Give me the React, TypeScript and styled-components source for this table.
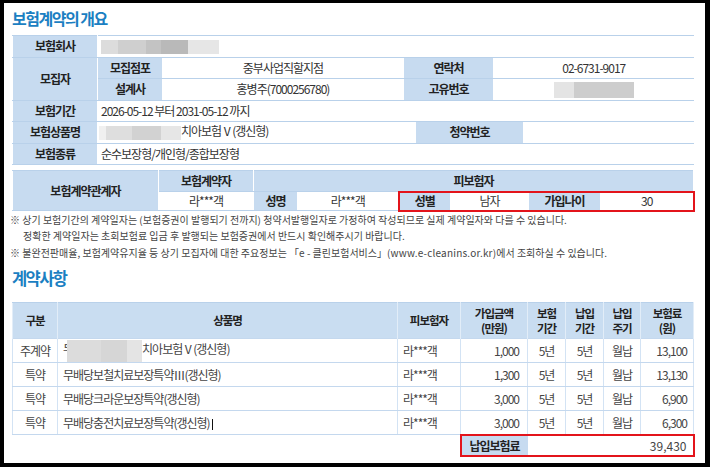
import React from "react";
import styled, { createGlobalStyle, css } from "styled-components";

const GlobalStyle = createGlobalStyle`
  html, body { margin: 0; padding: 0; background: #000; }
  body { font-family: "Noto Sans CJK KR", "Noto Sans", sans-serif; color: #333; }
  #root { width: 710px; height: 467px; overflow: hidden; }
`;

const Frame = styled.div`
  margin: 3px 0 0 4px;
  width: 701px;
  height: 460px;
  background: #fff;
  box-sizing: border-box;
  padding: 4px 0 0 8px;
  overflow: hidden;
`;

const Title = styled.h2<{ $size: number; $mt: number; $mb: number; $ls: number }>`
  margin: ${(p) => p.$mt}px 0 ${(p) => p.$mb}px 0;
  font-size: ${(p) => p.$size}px;
  line-height: 22px;
  font-weight: 700;
  color: #1b7fc2;
  letter-spacing: ${(p) => p.$ls}px;
`;

const Table = styled.table<{ $mt?: number }>`
  width: 681px;
  margin-top: ${(p) => p.$mt ?? 0}px;
  border-collapse: collapse;
  table-layout: fixed;
  font-size: 12px;
  letter-spacing: -1px;
`;

type Red = "left" | "mid" | "right";

const redCss = (r?: Red) =>
  r
    ? css`
        border-top: 2px solid #e3141b;
        border-bottom: 2px solid #e3141b;
        ${r === "left" ? "border-left: 2px solid #e3141b;" : ""}
        ${r === "right" ? "border-right: 2px solid #e3141b;" : ""}
      `
    : "";

const Row = styled.tr<{ $h: number }>`
  height: ${(p) => p.$h}px;
`;

const Label = styled.th<{ $red?: Red }>`
  background: #c7dbf0;
  color: #222;
  font-weight: 700;
  text-align: center;
  padding: 0;
  border-top: 1px solid #b9d1ea;
  border-bottom: 1px solid #b9d1ea;
  border-left: 1px solid #fff;
  border-right: 1px solid #fff;
  line-height: 14px;
  ${(p) => redCss(p.$red)}
`;

const Cell = styled.td<{ $align?: "left" | "center" | "right"; $pad?: number; $red?: Red }>`
  text-align: ${(p) => p.$align ?? "center"};
  padding: 0 ${(p) => p.$pad ?? 4}px;
  color: #333;
  line-height: 14px;
  border-top: 1px solid #b9d1ea;
  border-bottom: 1px solid #b9d1ea;
  white-space: nowrap;
  overflow: hidden;
  ${(p) => redCss(p.$red)}
`;

const HeadCell = styled.th`
  background: #c9ddf1;
  color: #222;
  font-weight: 700;
  font-size: 11.5px;
  line-height: 15px;
  text-align: center;
  padding: 0;
  border-left: 1px solid #e2edf8;
  border-right: 1px solid #e2edf8;
  border-top: 1px solid #b9d1ea;
`;

const BodyCell = styled.td<{ $align?: "left" | "center" | "right"; $pad?: number }>`
  text-align: ${(p) => p.$align ?? "center"};
  padding: 0 ${(p) => p.$pad ?? 4}px;
  color: #444;
  border-top: 1px solid #c4d8ee;
  border-bottom: 1px solid #c4d8ee;
  border-left: 1px solid #d3e3f4;
  border-right: 1px solid #d3e3f4;
  white-space: nowrap;
  overflow: hidden;
`;

const FootBlank = styled.td`
  border: none;
  border-top: 1px solid #c4d8ee;
`;

const FootLabel = styled.th`
  background: #c7dbf0;
  color: #222;
  font-weight: 700;
  padding: 0;
  text-align: center;
  border-top: 2px solid #e3141b;
  border-bottom: 2px solid #e3141b;
  border-left: 2px solid #e3141b;
`;

const FootValue = styled.td`
  text-align: right;
  padding: 0 6px;
  color: #444;
  letter-spacing: 0;
  border-top: 2px solid #e3141b;
  border-bottom: 2px solid #e3141b;
  border-right: 2px solid #e3141b;
`;

const Blur = styled.span<{ $w: number; $h: number; $bg: string; $ml?: number }>`
  display: inline-block;
  vertical-align: middle;
  position: relative;
  margin-left: ${(p) => p.$ml ?? 0}px;
  width: ${(p) => p.$w}px;
  height: ${(p) => p.$h}px;
  background: ${(p) => p.$bg};
  filter: blur(0.6px);
`;

const Caret = styled.span`
  display: inline-block;
  vertical-align: middle;
  width: 1px;
  height: 11px;
  margin-left: 2px;
  background: #111;
`;

const Notes = styled.div`
  margin: 0 0 0 -2px;
  font-size: 10px;
  line-height: 16.5px;
  letter-spacing: 0;
  color: #444;
`;

const NoteLine = styled.div<{ $indent?: number }>`
  padding-left: ${(p) => p.$indent ?? 0}px;
  white-space: nowrap;
`;

const Url = styled.span`
  letter-spacing: 0.2px;
`;

const companyBlur =
  "linear-gradient(90deg,#dcdcdc 0 14%,#cfcfcf 14% 38%,#c3c3c3 38% 51%,#b9b9b9 51% 74%,#e6e6e6 74% 100%)";
const idBlur = "linear-gradient(90deg,#e4e4e4 0 25%,#cdcdcd 25% 100%)";
const prodBlur = "linear-gradient(90deg,#f0f0f0 0 8%,#dedede 8% 40%,#d2d2d2 40% 75%,#e6e6e6 75% 100%)";
const prodBlur2 = "linear-gradient(90deg,#dcdcdc 0 45%,#d6d6d6 45% 80%,#e4e4e4 80% 100%)";

const Masked = () => <span>라***객</span>;

const items = [
  { kind: "주계약", name: null, amount: "1,000", premium: "13,100" },
  { kind: "특약", name: "무배당보철치료보장특약Ⅲ(갱신형)", amount: "1,300", premium: "13,130" },
  { kind: "특약", name: "무배당크라운보장특약(갱신형)", amount: "3,000", premium: "6,900" },
  { kind: "특약", name: "무배당충전치료보장특약(갱신형)", amount: "3,000", premium: "6,300" },
];

export default function App() {
  return (
    <>
      <GlobalStyle />
      <Frame>
        <Title $size={16} $ls={-1.5} $mt={0} $mb={6}>보험계약의 개요</Title>
        <Table>
          <colgroup>
            <col style={{ width: 85 }} />
            <col style={{ width: 65 }} />
            <col style={{ width: 241 }} />
            <col style={{ width: 12 }} />
            <col style={{ width: 78 }} />
            <col style={{ width: 30 }} />
            <col style={{ width: 170 }} />
          </colgroup>
          <tbody>
            <Row $h={21.5}>
              <Label>보험회사</Label>
              <Cell colSpan={6} $align="left" $pad={3}>
                <Blur $w={118} $h={14} $bg={companyBlur} />
              </Cell>
            </Row>
            <Row $h={21.5}>
              <Label rowSpan={2}>모집자</Label>
              <Label>모집점포</Label>
              <Cell>중부사업직할지점</Cell>
              <Label colSpan={2}>연락처</Label>
              <Cell colSpan={2}>02-6731-9017</Cell>
            </Row>
            <Row $h={21.5}>
              <Label>설계사</Label>
              <Cell>홍병주(7000256780)</Cell>
              <Label colSpan={2}>고유번호</Label>
              <Cell colSpan={2}>
                <Blur $w={80} $h={16} $bg={idBlur} />
              </Cell>
            </Row>
            <Row $h={21.5}>
              <Label>보험기간</Label>
              <Cell colSpan={6} $align="left" $pad={3}>2026-05-12 부터 2031-05-12 까지</Cell>
            </Row>
            <Row $h={21.5}>
              <Label>보험상품명</Label>
              <Cell colSpan={3} $align="left" $pad={1}>
                <Blur $w={82} $h={14} $bg={prodBlur} />치아보험Ⅴ(갱신형)
              </Cell>
              <Label colSpan={2}>청약번호</Label>
              <Cell></Cell>
            </Row>
            <Row $h={21.5}>
              <Label>보험종류</Label>
              <Cell colSpan={6} $align="left" $pad={3}>순수보장형/개인형/종합보장형</Cell>
            </Row>
          </tbody>
        </Table>

        <Table $mt={5}>
          <colgroup>
            <col style={{ width: 146 }} />
            <col style={{ width: 95 }} />
            <col style={{ width: 44 }} />
            <col style={{ width: 101 }} />
            <col style={{ width: 52 }} />
            <col style={{ width: 78 }} />
            <col style={{ width: 72 }} />
            <col style={{ width: 93 }} />
          </colgroup>
          <tbody>
            <Row $h={21}>
              <Label rowSpan={2}>보험계약관계자</Label>
              <Label>보험계약자</Label>
              <Label colSpan={6}>피보험자</Label>
            </Row>
            <Row $h={19}>
              <Cell><Masked /></Cell>
              <Label>성명</Label>
              <Cell><Masked /></Cell>
              <Label $red="left">성별</Label>
              <Cell $red="mid">남자</Cell>
              <Label $red="mid">가입나이</Label>
              <Cell $red="right">30</Cell>
            </Row>
          </tbody>
        </Table>

        <Notes>
          <NoteLine>※ 상기 보험기간의 계약일자는 (보험증권이 발행되기 전까지) 청약서발행일자로 가정하여 작성되므로 실제 계약일자와 다를 수 있습니다.</NoteLine>
          <NoteLine $indent={13}>정확한 계약일자는 초회보험료 입금 후 발행되는 보험증권에서 반드시 확인해주시기 바랍니다.</NoteLine>
          <NoteLine>
            ※ 불완전판매율, 보험계약유지율 등 상기 모집자에 대한 주요정보는 「e - 클린보험서비스」<Url>(www.e-cleanins.or.kr)</Url>에서 조회하실 수 있습니다.
          </NoteLine>
        </Notes>

        <Title $size={16.5} $ls={-1.6} $mt={6} $mb={13}>계약사항</Title>

        <Table>
          <colgroup>
            <col style={{ width: 45 }} />
            <col style={{ width: 340 }} />
            <col style={{ width: 63 }} />
            <col style={{ width: 67 }} />
            <col style={{ width: 38 }} />
            <col style={{ width: 38 }} />
            <col style={{ width: 37 }} />
            <col style={{ width: 53 }} />
          </colgroup>
          <thead>
            <Row $h={36}>
              <HeadCell>구분</HeadCell>
              <HeadCell>상품명</HeadCell>
              <HeadCell>피보험자</HeadCell>
              <HeadCell>가입금액<br />(만원)</HeadCell>
              <HeadCell>보험<br />기간</HeadCell>
              <HeadCell>납입<br />기간</HeadCell>
              <HeadCell>납입<br />주기</HeadCell>
              <HeadCell>보험료<br />(원)</HeadCell>
            </Row>
          </thead>
          <tbody>
            {items.map((it, i) => (
              <Row $h={24} key={i}>
                <BodyCell>{it.kind}</BodyCell>
                <BodyCell $align="left" $pad={5}>
                  {it.name ?? (
                    <>
                      <span>무</span>
                      <Blur $ml={-6} $w={75} $h={22} $bg={prodBlur2} />치아보험Ⅴ(갱신형)
                    </>
                  )}
                  {i === 3 && <Caret />}
                </BodyCell>
                <BodyCell $align="left" $pad={5}><Masked /></BodyCell>
                <BodyCell $align="right" $pad={8}>{it.amount}</BodyCell>
                <BodyCell>5년</BodyCell>
                <BodyCell>5년</BodyCell>
                <BodyCell>월납</BodyCell>
                <BodyCell $align="right" $pad={6}>{it.premium}</BodyCell>
              </Row>
            ))}
            <Row $h={21}>
              <FootBlank colSpan={3} />
              <FootLabel>납입보험료</FootLabel>
              <FootValue colSpan={4}>39,430</FootValue>
            </Row>
          </tbody>
        </Table>
      </Frame>
    </>
  );
}
